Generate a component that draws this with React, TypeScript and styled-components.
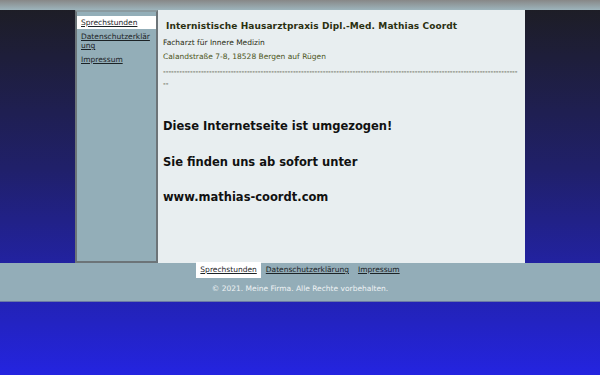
import React from "react";
import styled, { createGlobalStyle } from "styled-components";

const GlobalStyle = createGlobalStyle`
  html, body {
    margin: 0;
    padding: 0;
    height: 100%;
  }
  body {
    font-family: "DejaVu Sans", Verdana, sans-serif;
    background: linear-gradient(#1d1d22 0%, #20206a 45%, #2424e0 100%);
    min-height: 375px;
  }
`;

const TopBar = styled.div`
  height: 10px;
  background: linear-gradient(#878787, #9db4bc);
`;

const Main = styled.div`
  width: 450px;
  margin: 0 auto;
  display: flex;
  height: 253px;
`;

const Sidebar = styled.nav`
  width: 79px;
  background: #93aeb8;
  border: 2px solid #6c7478;
  border-top-color: #8a9a9f;
  padding-top: 4px;
  display: flex;
  flex-direction: column;
  gap: 1px;
`;

const SideLink = styled.a<{ $active?: boolean }>`
  display: block;
  font-size: 7.5px;
  line-height: 9px;
  padding: 2px 2px 2px 4px;
  color: #1c2326;
  text-decoration: underline;
  background: ${(p) => (p.$active ? "#ffffff" : "transparent")};
  word-break: break-all;
`;

const Content = styled.main`
  flex: 1;
  background: #e8eef0;
  padding: 8px 5px 0 5px;
  color: #111;
`;

const Title = styled.h1`
  font-size: 9px;
  font-weight: bold;
  letter-spacing: 0.1px;
  color: #2b3010;
  margin: 2px 0 0 3px;
  line-height: 12px;
`;

const Small = styled.p`
  font-size: 7.5px;
  line-height: 10px;
  margin: 6px 0 0 0;
  color: #282c10;
`;

const Address = styled(Small)`
  color: #4c5520;
  margin-top: 4px;
`;

const Dashes = styled.p`
  font-size: 7.5px;
  line-height: 12px;
  margin: 4px 0 0 0;
  color: #1a2200;
  word-break: break-all;
`;

const Notice = styled.p`
  font-size: 11.5px;
  font-weight: bold;
  margin: 0;
  line-height: 14px;
  color: #111;
  & + & {
    margin-top: 21.5px;
  }
`;

const NoticeBlock = styled.div`
  margin-top: 29px;
`;

const Footer = styled.footer`
  background: #93adb8;
  height: 38px;
  border-bottom: 1px solid #6b7aa6;
  display: flex;
  flex-direction: column;
  align-items: center;
`;

const FooterNav = styled.div`
  display: flex;
  gap: 1px;
  margin-top: -1px;
`;

const FooterLink = styled.a<{ $active?: boolean }>`
  font-size: 7.5px;
  line-height: 10px;
  padding: 3px 4px;
  color: #1c2326;
  text-decoration: underline;
  background: ${(p) => (p.$active ? "#ffffff" : "transparent")};
`;

const Copyright = styled.div`
  font-size: 7.5px;
  line-height: 10px;
  color: #eef2f4;
  margin-top: 6px;
`;

const dashes = "-".repeat(133);

export default function App() {
  return (
    <>
      <GlobalStyle />
      <TopBar />
      <Main>
        <Sidebar>
          <SideLink $active>Sprechstunden</SideLink>
          <SideLink>Datenschutzerklärung</SideLink>
          <SideLink>Impressum</SideLink>
        </Sidebar>
        <Content>
          <Title>Internistische Hausarztpraxis Dipl.-Med. Mathias Coordt</Title>
          <Small>Facharzt für Innere Medizin</Small>
          <Address>Calandstraße 7-8, 18528 Bergen auf Rügen</Address>
          <Dashes>{dashes}</Dashes>
          <NoticeBlock>
            <Notice>Diese Internetseite ist umgezogen!</Notice>
            <Notice>Sie finden uns ab sofort unter</Notice>
            <Notice>www.mathias-coordt.com</Notice>
          </NoticeBlock>
        </Content>
      </Main>
      <Footer>
        <FooterNav>
          <FooterLink $active>Sprechstunden</FooterLink>
          <FooterLink>Datenschutzerklärung</FooterLink>
          <FooterLink>Impressum</FooterLink>
        </FooterNav>
        <Copyright>© 2021. Meine Firma. Alle Rechte vorbehalten.</Copyright>
      </Footer>
    </>
  );
}
